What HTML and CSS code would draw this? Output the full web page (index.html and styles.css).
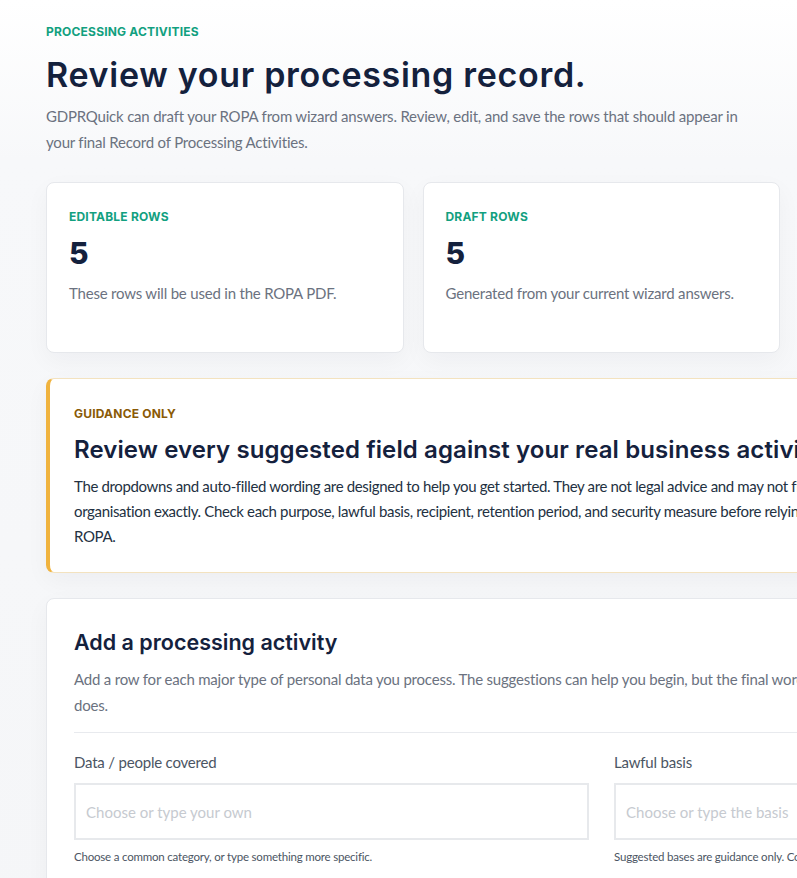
FILE: index.html
```html
<!DOCTYPE html>
<html lang="en">
<head>
  <meta charset="UTF-8">
  <meta name="viewport" content="width=device-width, initial-scale=1.0">
  <title>Review your processing record - GDPRQuick</title>
  <link rel="stylesheet" href="styles.css">
</head>
<body>
  <main class="page">
    <!-- Intro -->
    <section class="intro">
      <p class="eyebrow">Processing activities</p>
      <h1>Review your processing record.</h1>
      <p class="lead">GDPRQuick can draft your ROPA from wizard answers. Review, edit, and save the rows that should appear in your final Record of Processing Activities.</p>
    </section>

    <!-- Row counts -->
    <div class="stats">
      <div class="stat-card">
        <p class="eyebrow">Editable rows</p>
        <div class="stat-value">5</div>
        <p class="stat-note">These rows will be used in the ROPA PDF.</p>
      </div>
      <div class="stat-card">
        <p class="eyebrow">Draft rows</p>
        <div class="stat-value">5</div>
        <p class="stat-note">Generated from your current wizard answers.</p>
      </div>
    </div>

    <!-- Guidance notice -->
    <section class="notice">
      <p class="eyebrow eyebrow-warn">Guidance only</p>
      <h2>Review every suggested field against your real business activity.</h2>
      <p class="notice-text">The dropdowns and auto-filled wording are designed to help you get started. They are not legal advice and may not fit your organisation exactly. Check each purpose, lawful basis, recipient, retention period, and security measure before relying on your ROPA.</p>
    </section>

    <!-- Add row form -->
    <section class="panel">
      <h2 class="panel-title">Add a processing activity</h2>
      <p class="panel-text">Add a row for each major type of personal data you process. The suggestions can help you begin, but the final wording should reflect what your business actually does.</p>

      <form class="form-grid">
        <div class="field">
          <label for="dataCovered">Data / people covered</label>
          <input id="dataCovered" type="text" placeholder="Choose or type your own">
          <small>Choose a common category, or type something more specific.</small>
        </div>
        <div class="field">
          <label for="lawfulBasis">Lawful basis</label>
          <input id="lawfulBasis" type="text" placeholder="Choose or type the basis">
          <small>Suggested bases are guidance only. Confirm the one that fits each activity.</small>
        </div>
      </form>
    </section>
  </main>
</body>
</html>
```

FILE: styles.css
```css
html, body {
  overflow-x: hidden;
}
body {
  margin: 0;
  background: linear-gradient(#ffffff 0, #f7f8fa 160px, #f5f6f8 100%);
  font-family: Lato, "Noto Sans", sans-serif;
  color: #6b7280;
}
.page {
  width: 1111px;
  padding: 24px 0 40px 46px;
}
p {
  margin: 0;
}
.eyebrow {
  font-family: Inter, sans-serif;
  font-size: 12px;
  line-height: 16px;
  font-weight: 700;
  letter-spacing: 0.2px;
  text-transform: uppercase;
  color: #12a07f;
}
.eyebrow-warn {
  color: #8a5a06;
}
h1 {
  margin: 14px 0 8px;
  font-family: Inter, sans-serif;
  font-size: 34px;
  line-height: 41px;
  font-weight: 600;
  letter-spacing: 0.7px;
  color: #14213d;
}
.lead {
  max-width: 705px;
  font-size: 15px;
  line-height: 26px;
  letter-spacing: -0.2px;
}

/* stat cards */
.stats {
  display: grid;
  grid-template-columns: 1fr 1fr;
  gap: 19px;
  max-width: 734px;
  margin-top: 27px;
}
.stat-card {
  min-height: 117px;
  padding: 26px 22px 26px;
  background: #fff;
  border: 1px solid #e6e8ec;
  border-radius: 8px;
  box-shadow: 0 8px 24px rgba(15, 23, 42, 0.04);
}
.stat-value {
  margin: 10px 0;
  font-family: Inter, sans-serif;
  font-size: 30px;
  line-height: 36px;
  font-weight: 800;
  color: #14213d;
}
.stat-note {
  font-size: 15px;
  line-height: 24px;
  letter-spacing: -0.2px;
}

/* guidance */
.notice {
  margin-top: 25px;
  padding: 27px 24px 23px;
  background: #fff;
  border: 1px solid #f3e2bf;
  border-left: 4px solid #f0b33e;
  border-radius: 8px;
  box-shadow: 0 8px 24px rgba(15, 23, 42, 0.04);
}
.notice h2 {
  margin: 12px 0 8px;
  font-family: Inter, sans-serif;
  font-size: 24px;
  line-height: 32px;
  font-weight: 600;
  letter-spacing: 0.1px;
  white-space: nowrap;
  color: #14213d;
}
.notice-text {
  max-width: 800px;
  font-size: 15px;
  line-height: 25px;
  letter-spacing: -0.35px;
  color: #233142;
}

/* form panel */
.panel {
  margin-top: 25px;
  padding: 28px 27px 30px;
  background: #fff;
  border: 1px solid #e6e8ec;
  border-radius: 8px;
  box-shadow: 0 8px 24px rgba(15, 23, 42, 0.04);
}
.panel-title {
  margin: 0 0 9px;
  font-family: Inter, sans-serif;
  font-size: 21.5px;
  line-height: 30px;
  font-weight: 600;
  color: #14213d;
}
.panel-text {
  padding-bottom: 14px;
  border-bottom: 1px solid #e8eaee;
  font-size: 15px;
  line-height: 26px;
  letter-spacing: -0.2px;
}
.form-grid {
  display: grid;
  grid-template-columns: 1fr 1fr;
  gap: 25px;
  padding-top: 17px;
}
.field label {
  display: block;
  margin-bottom: 9px;
  font-size: 15px;
  line-height: 24px;
  letter-spacing: -0.2px;
  color: #4b5563;
}
.field input {
  box-sizing: border-box;
  width: 100%;
  height: 57px;
  padding: 0 10px;
  border: 2px solid #e7e9ec;
  border-radius: 0;
  background: #fff;
  font-family: Lato, sans-serif;
  font-size: 15px;
  color: #14213d;
}
.field input::placeholder {
  color: #c6cad0;
}
.field small {
  display: block;
  margin-top: 9px;
  font-size: 11.5px;
  line-height: 16px;
  letter-spacing: -0.2px;
  color: #4b5563;
}
```
